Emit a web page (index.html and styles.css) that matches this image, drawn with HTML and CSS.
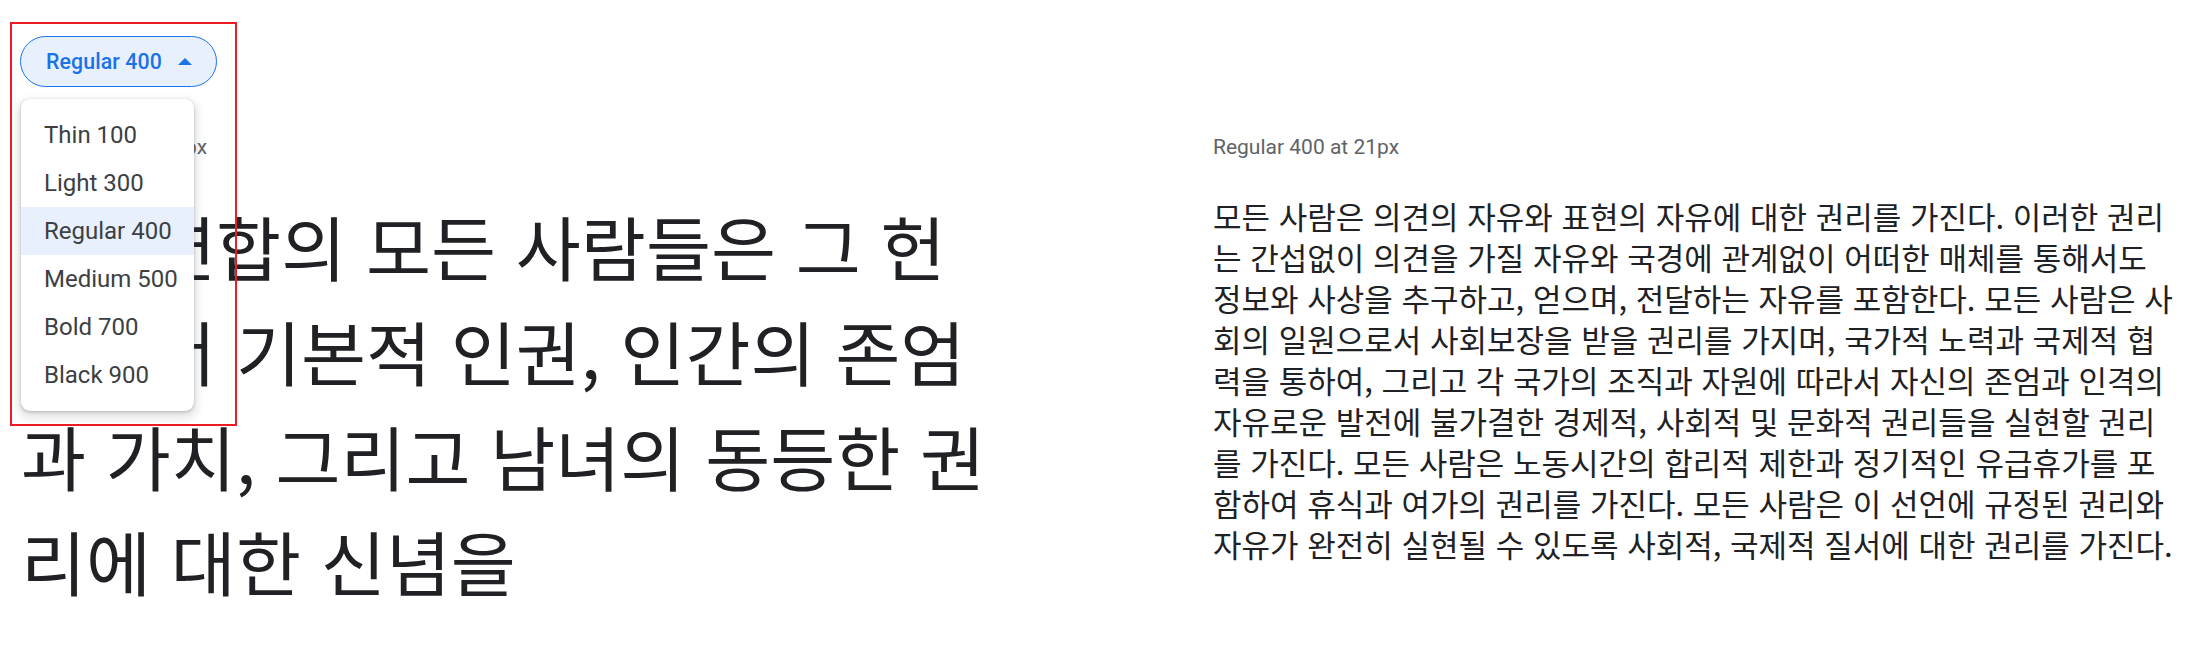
FILE: index.html
```html
<!DOCTYPE html>
<html lang="ko">
<head>
<meta charset="utf-8">
<title>Noto Sans KR specimen</title>
<link rel="stylesheet" href="styles.css">
</head>
<body>
<div class="toolbar">
  <button class="weight-btn" type="button">
    <span>Regular 400</span>
    <svg class="caret" width="14" height="7" viewBox="7 9 10 5" aria-hidden="true"><path d="M7 14l5-5 5 5z" fill="currentColor"/></svg>
  </button>
  <ul class="menu">
    <li class="menu-item">Thin 100</li>
    <li class="menu-item">Light 300</li>
    <li class="menu-item selected">Regular 400</li>
    <li class="menu-item">Medium 500</li>
    <li class="menu-item">Bold 700</li>
    <li class="menu-item">Black 900</li>
  </ul>
  <div class="highlight-box"></div>
</div>
<main class="page">
  <section class="specimen">
    <p class="label">Regular 400 at 48px</p>
    <p class="sample sample-large">국제연합의 모든 사람들은 그 헌장에서 기본적 인권, 인간의 존엄과 가치, 그리고 남녀의 동등한 권리에 대한 신념을</p>
  </section>
  <section class="specimen">
    <p class="label">Regular 400 at 21px</p>
    <p class="sample sample-small">모든 사람은 의견의 자유와 표현의 자유에 대한 권리를 가진다. 이러한 권리는 간섭없이 의견을 가질 자유와 국경에 관계없이 어떠한 매체를 통해서도 정보와 사상을 추구하고, 얻으며, 전달하는 자유를 포함한다. 모든 사람은 사회의 일원으로서 사회보장을 받을 권리를 가지며, 국가적 노력과 국제적 협력을 통하여, 그리고 각 국가의 조직과 자원에 따라서 자신의 존엄과 인격의 자유로운 발전에 불가결한 경제적, 사회적 및 문화적 권리들을 실현할 권리를 가진다. 모든 사람은 노동시간의 합리적 제한과 정기적인 유급휴가를 포함하여 휴식과 여가의 권리를 가진다. 모든 사람은 이 선언에 규정된 권리와 자유가 완전히 실현될 수 있도록 사회적, 국제적 질서에 대한 권리를 가진다.</p>
  </section>
</main>
</body>
</html>
```

FILE: styles.css
```css
* {
  box-sizing: border-box;
}

html, body {
  margin: 0;
  padding: 0;
  background: #ffffff;
}

body {
  width: 2202px;
  height: 646px;
  overflow: hidden;
  font-family: Roboto, "Noto Sans", "Noto Sans CJK KR", sans-serif;
  color: #202124;
}

.toolbar {
  position: relative;
  padding: 36px 0 0 20px;
  height: 87px;
}

.weight-btn {
  display: inline-flex;
  align-items: center;
  gap: 16px;
  height: 51px;
  padding: 0 24px 0 25px;
  border: 1px solid #1a73e8;
  border-radius: 26px;
  background: #e8f0fe;
  color: #1a73e8;
  font-family: Roboto, "Noto Sans", sans-serif;
  font-size: 21.3px;
  font-weight: 500;
  letter-spacing: 0.1px;
  cursor: pointer;
}

.caret {
  display: block;
  width: 14px;
  height: 7px;
}

.menu {
  position: absolute;
  top: 99px;
  left: 21px;
  z-index: 5;
  width: 173px;
  margin: 0;
  padding: 12px 0;
  list-style: none;
  background: #ffffff;
  border-radius: 9px;
  box-shadow: 0 1px 3px rgba(60, 64, 67, 0.3), 0 4px 8px 3px rgba(60, 64, 67, 0.15);
}

.menu-item {
  height: 48px;
  line-height: 48px;
  padding: 0 0 0 23px;
  font-size: 24px;
  color: #3c4043;
  white-space: nowrap;
}

.menu-item.selected {
  background: #e8f0fe;
}

.highlight-box {
  position: absolute;
  top: 22px;
  left: 10px;
  z-index: 6;
  width: 227px;
  height: 404px;
  border: 2px solid #ed1c24;
  pointer-events: none;
}

.page {
  display: grid;
  grid-template-columns: 971px 968px;
  column-gap: 221px;
  padding: 0 0 0 21px;
}

.label {
  margin: 46px 0 0;
  font-size: 21px;
  line-height: 28px;
  color: #5f6368;
}

.sample {
  margin: 32px 0 0;
  font-family: "Noto Sans CJK KR", "Noto Sans", sans-serif;
  color: #202124;
}

.sample-large {
  font-size: 70.7px;
  line-height: 105px;
}

.sample-small {
  margin-top: 34px;
  font-size: 31px;
  line-height: 41px;
}
```
